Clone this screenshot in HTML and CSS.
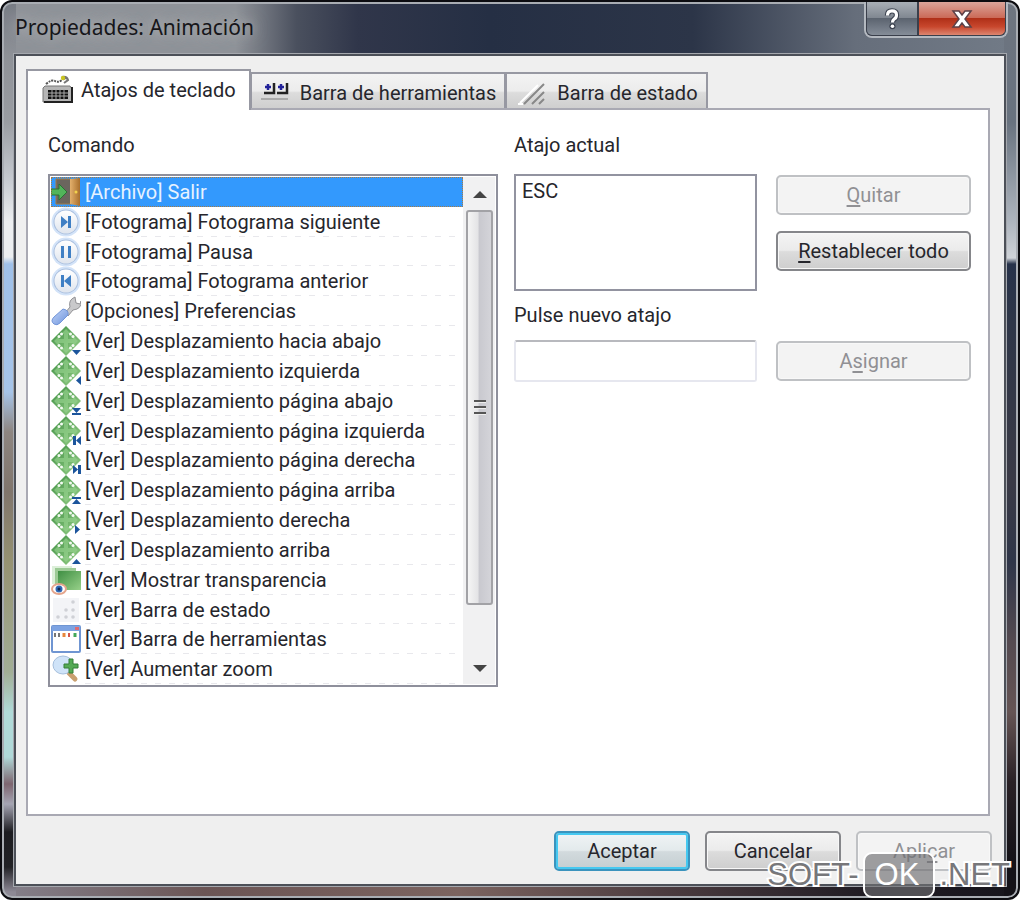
FILE: index.html
```html
<!DOCTYPE html>
<html lang="es">
<head>
<meta charset="utf-8">
<title>Propiedades: Animación</title>
<link rel="stylesheet" href="styles.css">
</head>
<body>
<svg class="defs" aria-hidden="true">
  <defs>
    <linearGradient id="gGreen" x1="0" y1="0" x2="1" y2="1"><stop offset="0" stop-color="#3f8f43"/><stop offset="1" stop-color="#97d089"/></linearGradient>
    <linearGradient id="gDoor" x1="0" x2="1"><stop offset="0" stop-color="#e3b06c"/><stop offset="1" stop-color="#a96f2c"/></linearGradient>
    <linearGradient id="gDisc" x1="0" y1="0" x2="0" y2="1"><stop offset="0" stop-color="#fff"/><stop offset="1" stop-color="#dfe5ee"/></linearGradient>
    <linearGradient id="gHandle" x1="0" y1="0" x2="1" y2="1"><stop offset="0" stop-color="#c3d6fa"/><stop offset="1" stop-color="#6c92da"/></linearGradient>
    <symbol id="disc" viewBox="0 0 30 30"><circle cx="15" cy="15" r="14.500" fill="#d3e3f8"/><circle cx="15" cy="15" r="12.500" fill="#a9bfdf"/><circle cx="15" cy="15" r="11.500" fill="url(#gDisc)"/></symbol>
    <symbol id="move" viewBox="0 0 30 30"><path d="M15 0L30 15L15 30L0 15Z" fill="url(#gGreen)"/><path d="M15 3l5 5h-3v5h5v-3l5 5-5 5v-3h-5v5h3l-5 5-5-5h3v-5H8v3l-5-5 5-5v3h5V8h-3z" fill="#9ad691" opacity=".6"/><g fill="#f4fbf3"><circle cx="10.500" cy="8" r="1.500"/><circle cx="19.500" cy="8" r="1.500"/><circle cx="10.500" cy="22" r="1.500"/><circle cx="19.500" cy="22" r="1.500"/><circle cx="8" cy="10.500" r="1.500"/><circle cx="22" cy="10.500" r="1.500"/><circle cx="8" cy="19.500" r="1.500"/><circle cx="22" cy="19.500" r="1.500"/></g></symbol>
  </defs>
</svg>

<main class="window">
  <header class="titlebar">
    <h1 class="title">Propiedades: Animación</h1>
    <div class="caption">
      <button class="cap help" type="button" aria-label="Ayuda"><svg width="18" height="22" viewBox="0 0 20 24"><path d="M5 8q0-5 5-5t5 4.500q0 3-2.500 4.500Q10.500 13.500 10.500 16" fill="none" stroke="#3d4350" stroke-width="6"/><circle cx="10.500" cy="20" r="3.400" fill="#3d4350"/><path d="M5 8q0-5 5-5t5 4.500q0 3-2.500 4.500Q10.500 13.500 10.500 16" fill="none" stroke="#fff" stroke-width="3.500"/><circle cx="10.500" cy="20" r="2" fill="#fff"/></svg></button>
      <button class="cap close" type="button" aria-label="Cerrar"><svg width="22" height="20" viewBox="0 0 22 20"><path d="M2 2h6l3 4 3-4h6l-6 8 6 8h-6l-3-4-3 4H2l6-8z" fill="#fff" stroke="#5d4147" stroke-width="1.500"/></svg></button>
    </div>
  </header>

  <div class="client">
    <div class="tabs" role="tablist">
      <button class="tab active" type="button" role="tab" aria-selected="true"><svg width="32" height="32" viewBox="0 0 32 32"><path d="M5 10q6-5 9-3t7-1 5-1" fill="none" stroke="#555" stroke-width="2" stroke-dasharray="2 1"/><path d="M21 3q5-1 6 3l-4 3" fill="none" stroke="#777" stroke-width="2"/><circle cx="22" cy="4" r="2.200" fill="#c9c520"/><path d="M4 12h25l2 3v13H2V14z" fill="#b5b5b5" stroke="#777"/><path d="M3 28h28V13" fill="none" stroke="#222" stroke-width="2"/><path d="M7 16h20v9H7z" fill="#111"/><path d="M6 19h22M6 22h22M11 15v11M15 15v11M19 15v11M23 15v11" stroke="#aaa"/></svg><span>Atajos de teclado</span></button>
      <button class="tab" type="button" role="tab"><svg width="32" height="24" viewBox="0 0 32 24"><path d="M4 12h10V2M17 12h10V2" fill="none" stroke="#222" stroke-width="2.500"/><path d="M5 6h6M18 6h6M8 3v6M21 3v6" stroke="#22229a" stroke-width="2.500"/><path d="M1 18h27" stroke="#aaa" stroke-width="2"/></svg><span>Barra de herramientas</span></button>
      <button class="tab" type="button" role="tab"><svg width="34" height="26" viewBox="0 0 34 26"><path d="M5 23L23 5M3 24h5" stroke="#fff" stroke-width="2"/><path d="M9 24L29 4M17 24l12-12M24 24l5-5" stroke="#888" stroke-width="2"/></svg><span>Barra de estado</span></button>
    </div>

    <section class="panel" role="tabpanel">
      <div class="commands">
        <h2 class="label">Comando</h2>
        <div class="listbox">
          <ul class="rows" role="listbox" aria-label="Comando">
            <li class="row selected" role="option" aria-selected="true"><svg viewBox="0 0 30 30"><path d="M5 2h15v25H5z" fill="#6b665e" stroke="#a67b45"/><path d="M19 2l10-1v28l-10-2z" fill="url(#gDoor)"/><circle cx="25" cy="15" r="1.500" fill="#f2d24c"/><path d="M0 12h8V7l8 8-8 8v-5H0z" fill="#52b45a" stroke="#2b7234"/></svg><span>[Archivo] Salir</span></li>
            <li class="row" role="option"><svg viewBox="0 0 30 30"><use href="#disc"/><path d="M10 9l7 6-7 6zM17 9h3v12h-3z" fill="#3f7fc4"/></svg><span>[Fotograma] Fotograma siguiente</span></li>
            <li class="row" role="option"><svg viewBox="0 0 30 30"><use href="#disc"/><path d="M10 9h3v12h-3zM17 9h3v12h-3z" fill="#3f7fc4"/></svg><span>[Fotograma] Pausa</span></li>
            <li class="row" role="option"><svg viewBox="0 0 30 30"><use href="#disc"/><path d="M20 9l-7 6 7 6zM10 9h3v12h-3z" fill="#3f7fc4"/></svg><span>[Fotograma] Fotograma anterior</span></li>
            <li class="row" role="option"><svg viewBox="0 0 30 30"><path d="M14 17l5-6q-2-7 5-10l1 6 4 1 1-3q1 8-8 9l-5 6z" fill="#c9c9cb" stroke="#929296"/><path d="M3 28q-4-3 0-7l9-8q6 1 5 6l-8 8q-3 3-6 1z" fill="url(#gHandle)" stroke="#7295d8"/></svg><span>[Opciones] Preferencias</span></li>
            <li class="row" role="option"><svg viewBox="0 0 30 30"><use href="#move"/><path d="M21 24h9l-4.500 5z" fill="#1c559c"/></svg><span>[Ver] Desplazamiento hacia abajo</span></li>
            <li class="row" role="option"><svg viewBox="0 0 30 30"><use href="#move"/><path d="M30 20v9l-5-4.500z" fill="#1c559c"/></svg><span>[Ver] Desplazamiento izquierda</span></li>
            <li class="row" role="option"><svg viewBox="0 0 30 30"><use href="#move"/><path d="M21 22h9l-4.500 5zM21 27h9v2h-9z" fill="#1c559c"/></svg><span>[Ver] Desplazamiento página abajo</span></li>
            <li class="row" role="option"><svg viewBox="0 0 30 30"><use href="#move"/><path d="M30 20v9l-5-4.500zM22 20h3v9h-3z" fill="#1c559c"/></svg><span>[Ver] Desplazamiento página izquierda</span></li>
            <li class="row" role="option"><svg viewBox="0 0 30 30"><use href="#move"/><path d="M22 20v9l5-4.500zM27 20h3v9h-3z" fill="#1c559c"/></svg><span>[Ver] Desplazamiento página derecha</span></li>
            <li class="row" role="option"><svg viewBox="0 0 30 30"><use href="#move"/><path d="M21 29h9l-4.500-5zM21 22h9v2h-9z" fill="#1c559c"/></svg><span>[Ver] Desplazamiento página arriba</span></li>
            <li class="row" role="option"><svg viewBox="0 0 30 30"><use href="#move"/><path d="M24 20v9l5-4.500z" fill="#1c559c"/></svg><span>[Ver] Desplazamiento derecha</span></li>
            <li class="row" role="option"><svg viewBox="0 0 30 30"><use href="#move"/><path d="M21 29h9l-4.500-5z" fill="#1c559c"/></svg><span>[Ver] Desplazamiento arriba</span></li>
            <li class="row" role="option"><svg viewBox="0 0 30 30"><path d="M1 1h20v18H1z" fill="#dcefd9"/><path d="M4 3h21v18H4z" fill="#9cca95"/><path d="M7 6h23v19H7z" fill="url(#gGreen)"/><ellipse cx="8" cy="24" rx="8" ry="6" fill="#e4a58d"/><ellipse cx="8" cy="24" rx="6" ry="4" fill="#fff"/><circle cx="8" cy="24" r="3.500" fill="#2f68b5"/><circle cx="8" cy="24" r="1.500" fill="#102850"/></svg><span>[Ver] Mostrar transparencia</span></li>
            <li class="row" role="option"><svg viewBox="0 0 30 30"><path d="M2 3h26v24H2z" fill="#f3f4f7"/><g fill="#cfd1d6"><circle cx="22" cy="7" r="1.800"/><circle cx="15" cy="15" r="1.800"/><circle cx="22" cy="15" r="1.800"/><circle cx="7" cy="22" r="1.800"/><circle cx="15" cy="22" r="1.800"/><circle cx="22" cy="22" r="1.800"/></g></svg><span>[Ver] Barra de estado</span></li>
            <li class="row" role="option"><svg viewBox="0 0 30 30"><rect x="1" y="2" width="28" height="26" rx="1" fill="#fff" stroke="#6f95d2" stroke-width="2"/><path d="M1 2h28v5H1z" fill="#7da3e2"/><path d="M24 3h4v3h-4z" fill="#dc6b73"/><path d="M4 9v4M8 9v4" stroke="#777" stroke-width="2"/><path d="M13 9v4" stroke="#e7873c" stroke-width="3"/><path d="M18 9v4" stroke="#d5574c" stroke-width="2"/><path d="M24 9v4" stroke="#42a85a" stroke-width="3"/></svg><span>[Ver] Barra de herramientas</span></li>
            <li class="row" role="option"><svg viewBox="0 0 30 30"><path d="M18 19l6 6" stroke="#c9a070" stroke-width="5" stroke-linecap="round"/><ellipse cx="12" cy="11" rx="10" ry="9" fill="#cfe3f8" stroke="#a5bfdd"/><path d="M18 5h4v5h5v4h-5v5h-4v-5h-5v-4h5z" fill="#55aa55" stroke="#347f38"/></svg><span>[Ver] Aumentar zoom</span></li>
          </ul>
          <div class="scroll" aria-hidden="true">
            <svg width="14" height="8" viewBox="0 0 14 8"><path d="M7 1l7 7H0z" fill="#444"/></svg>
            <div class="track"><div class="thumb"><i></i><i></i><i></i></div></div>
            <svg width="14" height="8" viewBox="0 0 14 8"><path d="M7 7l7-7H0z" fill="#444"/></svg>
          </div>
        </div>
      </div>

      <div class="shortcuts">
        <div class="field">
          <h2 class="label">Atajo actual</h2>
          <div class="current" role="listbox" aria-label="Atajo actual"><span role="option">ESC</span></div>
        </div>
        <div class="actions">
          <button class="btn" type="button" disabled><span><u>Q</u>uitar</span></button>
          <button class="btn" type="button"><span><u>R</u>establecer todo</span></button>
        </div>
        <div class="field">
          <label class="label" for="nuevo">Pulse nuevo atajo</label>
          <input class="entry" id="nuevo" type="text">
        </div>
        <div class="actions end">
          <button class="btn" type="button" disabled><span>A<u>s</u>ignar</span></button>
        </div>
      </div>
    </section>

    <footer class="footer">
      <button class="btn default" type="button">Aceptar</button>
      <button class="btn" type="button">Cancelar</button>
      <button class="btn" type="button" disabled><span>Apli<u>c</u>ar</span></button>
    </footer>
  </div>
  <div class="mark"><span>SOFT-</span><b>OK</b><span>.NET</span></div>
</main>
</body>
</html>
```
FILE: styles.css
```css
* { box-sizing: border-box; }

body {
  margin: 0;
  background: #fff;
  color: #26262c;
  font: 20px/30px Roboto, Arial, sans-serif;
}

button, input { font: inherit; color: inherit; }

.defs { position: absolute; width: 0; height: 0; }

.window {
  position: relative;
  min-height: 100vh;
  display: flex;
  flex-direction: column;
  padding: 0 12px 12px;
  border: 2px solid #0c0c10;
  border-radius: 12px;
  overflow: hidden;
  box-shadow: inset 0 0 0 2px #a9adb3;
  background:
    linear-gradient(#777b84 0, #8e9197 54px, #9a9da3 120px, #c8ccd2 180px, #eceef0 220px, #eceef0 255px, #9fc0e8 262px, #a6c4e8 390px, #8d8580 430px, #80756c 490px, #969272 560px, #a2ae96 670px, #b0dad8 710px, #b0d8d8 755px, #7d656f 782px, #a5a5b3 802px, #1c1c20 830px, #222226 865px, #8d8995 890px) left / 14px 100% no-repeat,
    linear-gradient(#6e7580 0, #68727f 120px, #aeb5be 220px, #cfd3d8 256px, #27324a 262px, #2e3648 320px, #3a3a46 480px, #2f3649 560px, #544a50 640px, #655454 710px, #292126 780px, #141218 860px) right / 14px 100% no-repeat,
    linear-gradient(90deg, #85818c, #6b5555 20%, #7c6460 45%, #4c3c40 65%, #201c24 85%, #17151c) bottom / 100% 14px no-repeat,
    linear-gradient(90deg, #8f9298 0, #8f9298 23%, #4a505e 29%, #30364a 35%, #252f44 48%, #2c3548 68%, #666e7b 84%, #727b87 100%);
}

.titlebar {
  display: flex;
  justify-content: space-between;
  align-items: flex-start;
  height: 52px;
  margin-right: -2px;
}

.title {
  margin: 9px 0 0 1px;
  font: 21px/32px "Noto Sans", "Open Sans", sans-serif;
  color: #16161a;
  text-shadow: 0 0 12px #b4b6ba, 0 0 20px #a8abb0;
}

.caption {
  display: flex;
  border: 2px solid #b4b9c0;
  border-top: 0;
  border-radius: 0 0 8px 8px;
}

.cap {
  display: flex;
  align-items: center;
  justify-content: center;
  height: 34px;
  padding: 0;
  border: 1px solid #3a3f4b;
  border-top: 0;
}

.help {
  width: 52px;
  border-radius: 0 0 0 6px;
  background: linear-gradient(#a9afb6, #808791 48%, #5c6470 50%, #858d98);
}

.close {
  width: 88px;
  border-radius: 0 0 6px 0;
  background: linear-gradient(#dba59a, #cb6a57 48%, #b03018 50%, #c8472d 75%, #dd8670);
}

.client {
  flex: 1;
  display: flex;
  flex-direction: column;
  padding: 13px 14px 13px 10px;
  border: 2px solid #4c5058;
  background: #efefef;
  box-shadow: 0 0 0 1px #a5a8ae;
}

.tabs { display: flex; align-items: flex-end; }

.tab {
  display: flex;
  align-items: center;
  gap: 8px;
  height: 36px;
  padding: 4px 8px 0;
  border: 2px solid #9798a2;
  border-bottom: 0;
  background: linear-gradient(#f3f3f3, #ececec 50%, #dcdcdc 55%, #cfcfcf);
  white-space: nowrap;
}

.tab + .tab { border-left-width: 1px; }

.tab.active {
  z-index: 1;
  height: 41px;
  margin-bottom: -2px;
  padding: 0 13px 2px;
  background: #fff;
}

.panel {
  flex: 1;
  display: grid;
  grid-template-columns: 450fr 457fr;
  align-items: start;
  gap: 16px;
  padding: 20px 17px 20px 20px;
  border: 2px solid #a9a9b3;
  background: #fff;
}

.label {
  display: block;
  margin: 0 0 14px;
  font-size: 20px;
  line-height: 30px;
  font-weight: 400;
}

.listbox {
  display: flex;
  height: 513px;
  padding: 1px;
  border: 2px solid #8f909c;
}

.rows {
  flex: 1;
  display: flex;
  flex-direction: column;
  margin: 0;
  padding: 0;
  list-style: none;
}

.row {
  flex: 1;
  min-height: 0;
  display: flex;
  align-items: center;
  gap: 4px;
  background: repeating-linear-gradient(90deg, #e8e8ec 0 6px, transparent 6px 14px) 34px 100% / 100% 1px no-repeat;
  white-space: nowrap;
}

.row svg { width: 30px; height: 30px; flex: none; }
.row span { flex: 1; }

.selected {
  background: #3399fd;
  color: #e6f2ff;
  outline: 1px dotted #a67b45;
  outline-offset: -1px;
}

.scroll {
  width: 32px;
  display: flex;
  flex-direction: column;
  align-items: center;
  padding: 13px 2px 11px 3px;
  background: #f1f1f2;
}

.track {
  flex: 1;
  width: 100%;
  padding: 12px 0 60px;
}

.thumb {
  height: 100%;
  display: flex;
  flex-direction: column;
  align-items: center;
  justify-content: center;
  gap: 3px;
  border: 2px solid #a2a2a6;
  border-radius: 3px;
  background: linear-gradient(90deg, #f5f5f5, #e4e4e6 42%, #c9c9cf 50%, #d4d4d9);
}

.thumb i { width: 12px; height: 3px; background: #555; border-bottom: 1px solid #eee; }

.shortcuts {
  display: grid;
  grid-template-columns: 243fr 195fr;
  column-gap: 19px;
  row-gap: 9px;
}

.field:nth-child(3) .label { margin-bottom: 10px; }

.current {
  height: 117px;
  padding: 0 6px;
  border: 2px solid #9293a0;
}

.entry {
  width: 100%;
  height: 42px;
  padding: 0 8px;
  border: 2px solid #e6e7ef;
  border-top-color: #b8b9be;
  border-radius: 3px;
  background: #fff;
}

.actions {
  display: flex;
  flex-direction: column;
  gap: 16px;
  padding-top: 45px;
}

.actions.end { justify-content: flex-end; padding: 0 0 1px; }

.btn {
  height: 40px;
  padding: 0 8px;
  border: 2px solid #85868a;
  border-radius: 5px;
  background: linear-gradient(#f4f4f4, #ebebeb 48%, #dcdcdc 52%, #cecece);
  box-shadow: inset 0 0 0 1px #f8f8f8;
  white-space: nowrap;
}

.btn:disabled {
  border-color: #bfc1c4;
  background: #f3f3f3;
  color: #909094;
}

.btn u { text-underline-offset: 3px; }

.footer {
  display: flex;
  justify-content: flex-end;
  gap: 15px;
  margin-right: -2px;
  padding-top: 15px;
}

.footer .btn { width: 136px; }

.btn.default {
  border-color: #3b93bd;
  background: linear-gradient(#f0f4f5, #e3eaec 48%, #d2dadd 52%, #c4ced1);
  box-shadow: inset 0 0 0 2px #45c8f0;
}

/* Site watermark over the lower right corner */
.mark {
  position: absolute;
  right: 8px;
  bottom: 0;
  display: flex;
  align-items: center;
  gap: 4px;
  font: 31px/42px "Liberation Sans", Arial, sans-serif;
  color: #77777a;
  -webkit-text-stroke: 4px #fff;
  paint-order: stroke fill;
}

.mark b {
  padding: 0 14px 0 10px;
  border: 2px solid #fff;
  border-radius: 9px;
  background: rgba(110, 110, 114, .65);
  color: #fff;
  font-weight: 400;
  -webkit-text-stroke: 0;
}
```
